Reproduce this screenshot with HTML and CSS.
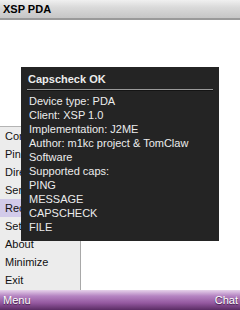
FILE: index.html
```html
<!DOCTYPE html>
<html lang="en">
<head>
    <meta charset="UTF-8">
    <meta name="viewport" content="width=device-width, initial-scale=1.0">
    <title>XSP PDA</title>
    <link rel="stylesheet" href="styles.css">
</head>
<body>
    <div class="screen">
        <div class="title-bar">XSP PDA</div>
        <div class="content">
            <!-- Menu abierto -->
            <ul class="menu">
                <li>Connect</li>
                <li>Ping</li>
                <li>Direct</li>
                <li>Services</li>
                <li class="selected">Reconnect</li>
                <li>Settings</li>
                <li>About</li>
                <li>Minimize</li>
                <li>Exit</li>
            </ul>
            <!-- Ventana emergente -->
            <div class="popup">
                <div class="popup-title">Capscheck OK</div>
                <div class="popup-sep"></div>
                <div class="popup-body">
                    <div>Device type: PDA</div>
                    <div>Client: XSP 1.0</div>
                    <div>Implementation: J2ME</div>
                    <div>Author: m1kc project &amp; TomClaw</div>
                    <div>Software</div>
                    <div>Supported caps:</div>
                    <div>PING</div>
                    <div>MESSAGE</div>
                    <div>CAPSCHECK</div>
                    <div>FILE</div>
                </div>
            </div>
        </div>
        <div class="soft-keys">
            <span>Menu</span>
            <span>Chat</span>
        </div>
    </div>
</body>
</html>
```
FILE: styles.css
```css
body {
    margin: 0;
    padding: 0;
    font-family: "Liberation Sans", Arial, sans-serif;
    font-size: 11px;
}
.screen {
    width: 240px;
    height: 310px;
    display: flex;
    flex-direction: column;
    background: white;
}
.title-bar {
    height: 18px;
    line-height: 18px;
    padding-left: 3px;
    font-weight: bold;
    color: #000;
    background: linear-gradient(#f0f0f0, #dadada 40%, #c6c6c6);
    border-bottom: 2px solid #9a9a9a;
}
.content {
    flex: 1;
    position: relative;
    background: white;
}
.menu {
    position: absolute;
    left: 0;
    bottom: 0;
    width: 80px;
    margin: 0;
    padding: 0 0 1px 0;
    list-style: none;
    background: #ececec;
    border-top: 1px solid #b4b4b4;
    border-right: 1px solid #a8a8a8;
}
.menu li {
    height: 18px;
    line-height: 18px;
    padding-left: 5px;
    color: #111;
    white-space: nowrap;
}
.menu li.selected {
    background: #d2cbe9;
}
.popup {
    position: absolute;
    left: 21px;
    top: 47px;
    width: 186px;
    padding: 5px 6px 7px 6px;
    background: #242424;
    color: #ececec;
}
.popup-title {
    height: 14px;
    line-height: 14px;
    padding-left: 1px;
    font-weight: bold;
}
.popup-sep {
    margin-top: 3px;
    height: 1px;
    background: #9a9a9a;
    border-bottom: 1px solid #141414;
}
.popup-body {
    margin-top: 3px;
    padding-left: 2px;
}
.popup-body div {
    height: 14px;
    line-height: 14px;
    white-space: nowrap;
}
.soft-keys {
    height: 20px;
    display: flex;
    justify-content: space-between;
    align-items: center;
    padding: 0 2px 0 3px;
    color: white;
    text-shadow: 0 1px 1px #3a1a40;
    background: linear-gradient(#e6d2ea, #b584c2 30%, #94589f 65%, #5a2c64);
}
```
